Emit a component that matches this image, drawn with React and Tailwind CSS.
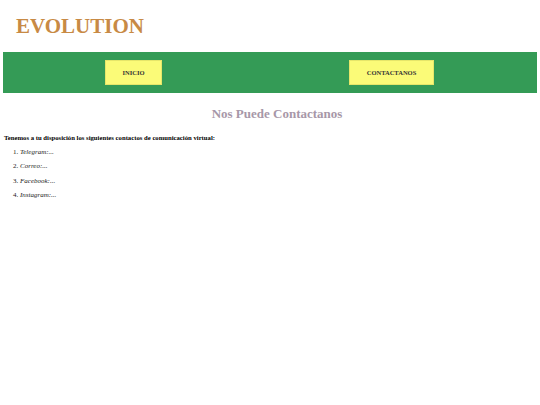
export default function App() {
  const serif = { fontFamily: '"Liberation Serif", "Times New Roman", serif' };
  return (
    <div className="w-[540px] h-[405px] bg-white" style={serif}>
      <div className="h-[52px] flex items-center pl-[16px]">
        <h1 className="text-[21px] font-bold leading-none text-[#c88a45]">EVOLUTION</h1>
      </div>
      <nav className="mx-[3px] h-[41px] bg-[#349b56] flex items-center">
        <div className="ml-[102px] w-[57px] h-[25px] bg-[#fbfb78] border border-[#e6e66a] flex items-center justify-center text-[6.5px] font-bold text-[#333]">
          INICIO
        </div>
        <div className="ml-[187px] w-[85px] h-[25px] bg-[#fbfb78] border border-[#e6e66a] flex items-center justify-center text-[6.5px] font-bold text-[#333]">
          CONTACTANOS
        </div>
      </nav>
      <h2 className="mt-[14px] text-center text-[13px] font-bold text-[#a797a8] leading-none pl-[14px]">
        Nos Puede Contactanos
      </h2>
      <p className="mt-[15px] ml-[4px] text-[6.7px] font-bold text-black leading-none">
        Tenemos a tu disposición los siguientes contactos de comunicación virtual:
      </p>
      <ol className="mt-[7px] ml-[20px] list-decimal text-[7px] text-[#222] leading-none">
        <li className="h-[14.5px]"><span className="italic">Telegram:...</span></li>
        <li className="h-[14.5px]"><span className="italic">Correo:...</span></li>
        <li className="h-[14.5px]"><span className="italic">Facebook:...</span></li>
        <li className="h-[14.5px]"><span className="italic">Instagram:...</span></li>
      </ol>
    </div>
  );
}
